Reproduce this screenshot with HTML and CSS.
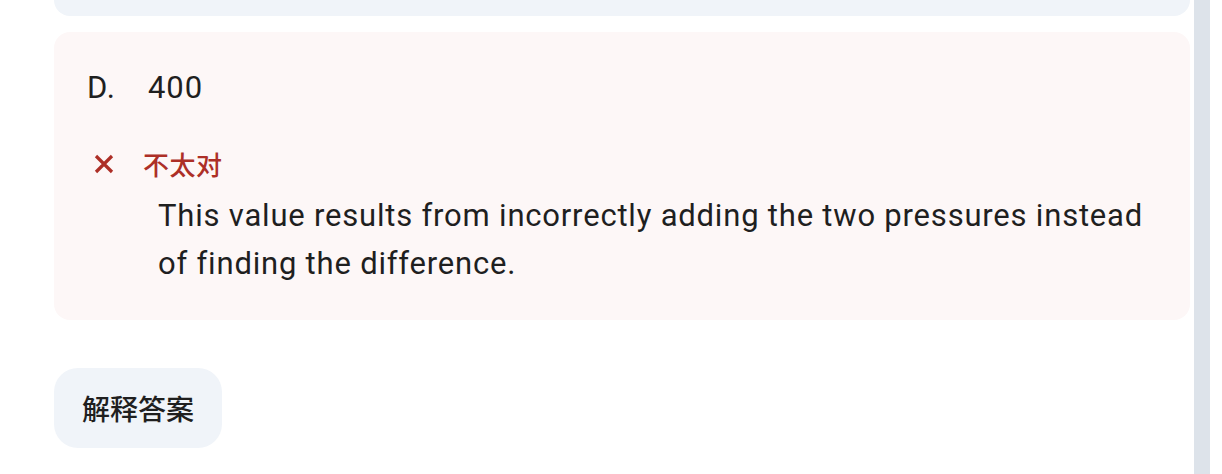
FILE: index.html
```html
<!DOCTYPE html>
<html lang="zh">
<head>
<meta charset="utf-8">
<link rel="stylesheet" href="styles.css">
</head>
<body>
<div class="page">
  <main class="content">
    <div class="card-prev"></div>
    <section class="option-card">
      <div class="option-row">
        <span class="option-letter">D.</span>
        <span class="option-value">400</span>
      </div>
      <div class="feedback-head">
        <svg class="x-icon" viewBox="0 0 24 24" width="32" height="32" aria-hidden="true">
          <path d="M6 6 L18 18 M18 6 L6 18" stroke="#ad2f27" stroke-width="2.4" stroke-linecap="butt" fill="none"/>
        </svg>
        <span class="feedback-label">不太对</span>
      </div>
      <p class="explanation">This value results from incorrectly adding the two pressures instead of finding the difference.</p>
    </section>
    <button class="explain-btn">解释答案</button>
  </main>
  <div class="scrollbar"></div>
</div>
</body>
</html>
```
FILE: styles.css
```css
html, body {
  margin: 0;
  padding: 0;
  background: #ffffff;
}
body {
  font-family: Roboto, "Noto Sans CJK SC", sans-serif;
  color: #1f1f1f;
}
.page {
  display: flex;
  height: 474px;
  overflow: hidden;
  padding-right: 12px;
}
.content {
  flex: 1;
  padding: 0 4px 0 54px;
  display: flex;
  flex-direction: column;
  align-items: flex-start;
}
.card-prev {
  align-self: stretch;
  height: 16px;
  background: #f0f4f9;
  border-radius: 0 0 16px 16px;
}
.option-card {
  align-self: stretch;
  margin-top: 16px;
  background: #fdf7f7;
  border-radius: 16px;
  padding: 32px 32px 32px 33px;
  height: 288px;
  box-sizing: border-box;
}
.option-row {
  display: flex;
  height: 48px;
  align-items: center;
  font-size: 31px;
  line-height: 48px;
  letter-spacing: 0.9px;
}
.option-letter {
  width: 61px;
}
.feedback-head {
  display: flex;
  align-items: center;
  margin-top: 32px;
  height: 40px;
}
.x-icon {
  margin-left: 1px;
  margin-right: 23px;
}
.feedback-label {
  font-size: 26px;
  font-weight: 500;
  color: #ad2f27;
  font-family: "Noto Sans CJK SC", sans-serif;
  line-height: 40px;
  letter-spacing: 0.5px;
}
.explanation {
  margin: 8px 0 0 71px;
  font-size: 31px;
  line-height: 48px;
  letter-spacing: 0.8px;
}
.explain-btn {
  margin-top: 48px;
  height: 80px;
  padding: 0 28px;
  border: none;
  border-radius: 24px;
  background: #f0f4f9;
  color: #1f1f1f;
  font-family: "Noto Sans CJK SC", sans-serif;
  font-size: 28px;
  font-weight: 500;
}
.scrollbar {
  width: 16px;
  background: #dde3ea;
}
```
